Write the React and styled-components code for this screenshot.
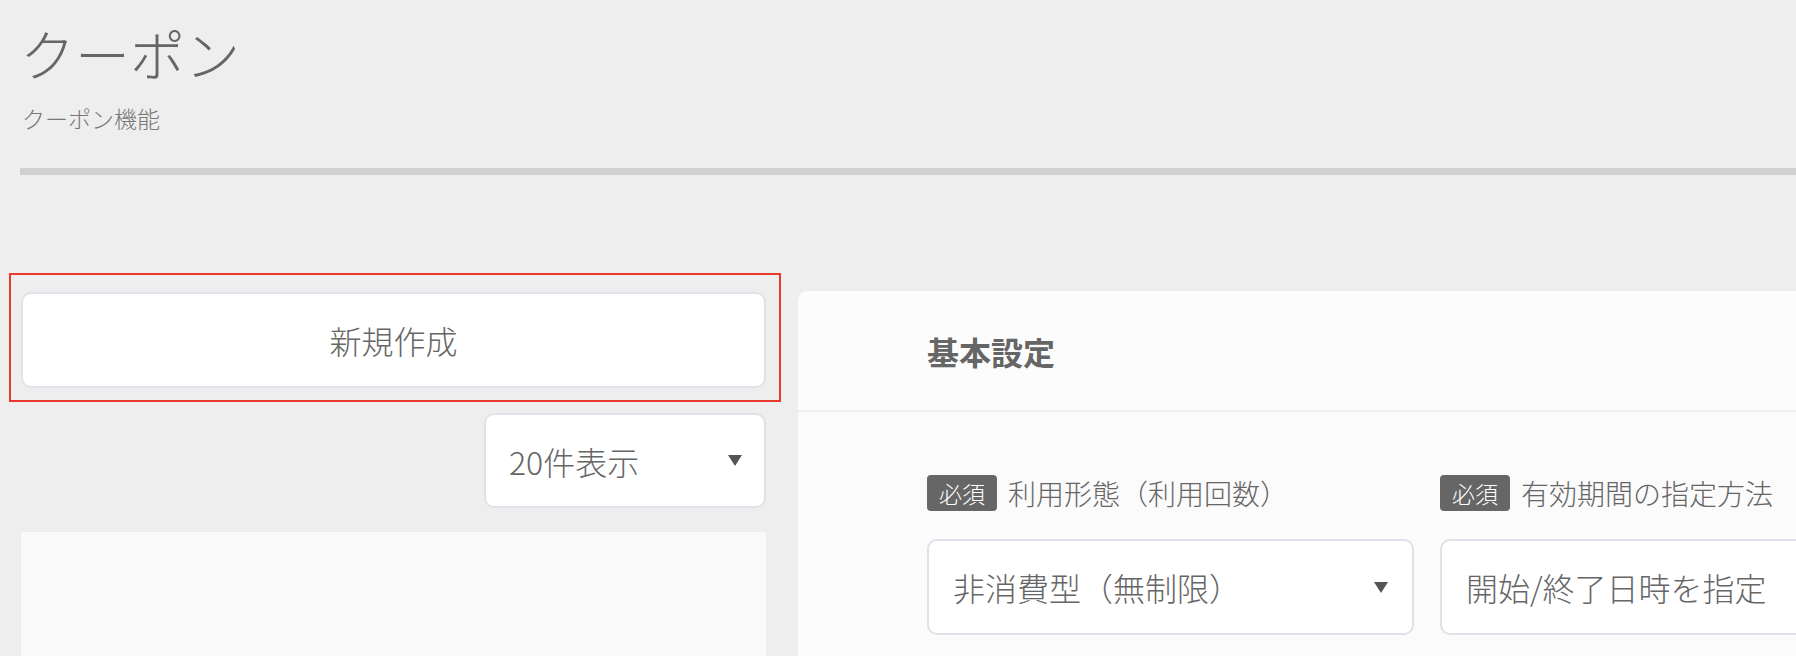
import React from 'react';
import styled, {createGlobalStyle} from 'styled-components';

const GlobalStyle = createGlobalStyle`
  html, body {
    margin: 0;
    padding: 0;
    background: #eeeeee;
    overflow: hidden;
  }
  * {
    box-sizing: border-box;
  }
  body {
    font-family: "Noto Sans CJK JP", "Noto Sans", sans-serif;
    color: #666;
  }
`

const Page = styled.div`
  width: 1796px;
  height: 656px;
  padding-left: 20px;
  overflow: hidden;
`
const Header = styled.header`
  padding-top: 20px;
`
const Title = styled.h1`
  margin: 0;
  font-size: 55px;
  line-height: 64px;
  font-weight: 300;
  color: #666;
`
const SubTitle = styled.p`
  margin: 19px 0 0 2px;
  font-size: 23px;
  line-height: 30px;
  font-weight: 300;
  color: #777;
`
const Divider = styled.hr`
  margin: 35px 0 0;
  border: none;
  height: 7px;
  background: #d0d0d0;
`

const Main = styled.div`
  display: flex;
  align-items: flex-start;
  margin-top: 98px;
`
const SideColumn = styled.div`
  display: flex;
  flex-direction: column;
  width: 745px;
  flex-shrink: 0;
  margin-left: 1px;
`
const Highlight = styled.div`
  margin: 0 -15px 0 -12px;
  padding: 17px 13px 12px 10px;
  border: 2px solid #e8392c;
`
const CreateButton = styled.button`
  display: block;
  width: 100%;
  height: 96px;
  background: #fff;
  border: 2px solid #dfe2e8;
  border-radius: 10px;
  font-family: inherit;
  font-size: 32px;
  font-weight: 300;
  color: #666;
  cursor: pointer;
`
const SelectBox = styled.div`
  display: flex;
  align-items: center;
  justify-content: space-between;
  width: ${p => p.width || '100%'};
  height: 96px;
  padding: 0 24px 0 24px;
  background: #fff;
  border: 2px solid #dfe2e8;
  border-radius: 10px;
  font-size: 32px;
  font-weight: 300;
  color: #666;
  white-space: nowrap;
`
const CountSelect = styled(SelectBox)`
  align-self: flex-end;
  height: 95px;
  margin-top: 11px;
  padding: 0 22px 0 23px;
`
const ListPanel = styled.div`
  margin-top: 24px;
  height: 200px;
  background: #fafafa;
`

const Card = styled.section`
  flex-shrink: 0;
  width: 1260px;
  margin: 18px 0 0 32px;
  background: #fbfbfb;
  border-radius: 10px;
  overflow: hidden;
`
const CardHeader = styled.div`
  display: flex;
  align-items: center;
  height: 121px;
  padding-left: 129px;
  background: #fcfcfc;
  border-bottom: 2px solid #efefef;
  font-size: 32px;
  font-weight: 700;
  color: #666;
`
const CardBody = styled.div`
  display: grid;
  grid-template-columns: 487px 487px;
  column-gap: 26px;
  padding: 63px 129px 40px;
`
const Field = styled.div`
  display: flex;
  flex-direction: column;
  gap: 28px;
`
const LabelRow = styled.div`
  display: flex;
  align-items: center;
  gap: 11px;
  height: 36px;
  font-size: 28px;
  font-weight: 300;
  color: #666;
  white-space: nowrap;
`
const Badge = styled.span`
  display: inline-flex;
  align-items: center;
  justify-content: center;
  width: 70px;
  height: 36px;
  background: #666;
  border-radius: 4px;
  color: #fff;
  font-size: 23px;
`

const Caret = () => (
    <svg width="14" height="11" viewBox="0 0 14 11">
        <polygon points="0,0 14,0 7,11" fill="#555"/>
    </svg>
)

const fields = [
    {label: "利用形態（利用回数）", value: "非消費型（無制限）", select: true},
    {label: "有効期間の指定方法", value: "開始/終了日時を指定", select: true},
];

const App = () => {
    return (
        <Page>
            <GlobalStyle/>
            <Header>
                <Title>クーポン</Title>
                <SubTitle>クーポン機能</SubTitle>
                <Divider/>
            </Header>
            <Main>
                <SideColumn>
                    <Highlight>
                        <CreateButton>新規作成</CreateButton>
                    </Highlight>
                    <CountSelect width="282px">
                        <span>20件表示</span>
                        <Caret/>
                    </CountSelect>
                    <ListPanel/>
                </SideColumn>
                <Card>
                    <CardHeader>基本設定</CardHeader>
                    <CardBody>
                        {fields.map((f, idx) =>
                            <Field key={idx}>
                                <LabelRow><Badge>必須</Badge>{f.label}</LabelRow>
                                <SelectBox>
                                    <span>{f.value}</span>
                                    {f.select && <Caret/>}
                                </SelectBox>
                            </Field>
                        )}
                    </CardBody>
                </Card>
            </Main>
        </Page>
    );
};

export default App;
